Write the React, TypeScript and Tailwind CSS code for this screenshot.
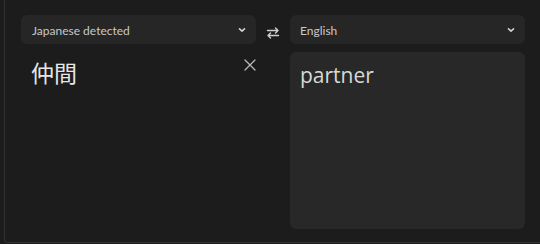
import React from "react";

export default function App() {
  return (
    <div className="w-[540px] h-[244px] bg-[#1c1c1c] overflow-hidden" style={{ fontFamily: "Lato, 'Noto Sans CJK JP', sans-serif" }}>
      <div className="ml-[4px] h-[243px] border-l border-b border-[#303030] rounded-bl-[4px] pl-[16px] pr-[15px] pt-[15px] flex">
        <div className="w-[235px] shrink-0 flex flex-col">
          <div className="h-[29px] rounded-[6px] bg-[#262626] flex items-center justify-between pl-[11px] pr-[9px]">
            <span className="text-[12px] text-[#c8c8c8] translate-y-[1px]">Japanese detected</span>
            <svg width="10" height="10" viewBox="0 0 10 10" fill="none" stroke="#d0d0d0" strokeWidth="1.6" strokeLinecap="round" strokeLinejoin="round"><path d="M2.5 3.8 L5 6.2 L7.5 3.8" /></svg>
          </div>
          <div className="flex justify-between items-start pl-[10px] pt-[16px]">
            <span className="text-[23px] leading-[26px] text-[#e6e6e6]">仲間</span>
            <svg className="mt-[-2px] mr-[-1px]" width="14" height="14" viewBox="0 0 14 14" fill="none" stroke="#bdbdbd" strokeWidth="1.2" strokeLinecap="round"><path d="M2 2 L12 12 M12 2 L2 12" /></svg>
          </div>
        </div>
        <div className="w-[34px] shrink-0 flex justify-center pt-[11px]">
          <svg width="14" height="14" viewBox="0 0 14 14" fill="none" stroke="#cfcfcf" strokeWidth="1.4" strokeLinecap="round" strokeLinejoin="round">
            <path d="M1.5 4.5 H12 M9.5 2 L12 4.5 L9.5 7" />
            <path d="M12.5 9.5 H2 M4.5 7 L2 9.5 L4.5 12" />
          </svg>
        </div>
        <div className="w-[235px] shrink-0 flex flex-col gap-[8px]">
          <div className="h-[29px] rounded-[6px] bg-[#262626] flex items-center justify-between pl-[10px] pr-[9px]">
            <span className="text-[12px] text-[#c8c8c8] translate-y-[1px]">English</span>
            <svg width="10" height="10" viewBox="0 0 10 10" fill="none" stroke="#d0d0d0" strokeWidth="1.6" strokeLinecap="round" strokeLinejoin="round"><path d="M2.5 3.8 L5 6.2 L7.5 3.8" /></svg>
          </div>
          <div className="h-[177px] rounded-[6px] bg-[#282828] px-[10px] pt-[10px]">
            <span className="text-[21px] leading-[27px] text-[#d8d8d8]" style={{ fontFamily: "'Open Sans', sans-serif" }}>partner</span>
          </div>
        </div>
      </div>
    </div>
  );
}
